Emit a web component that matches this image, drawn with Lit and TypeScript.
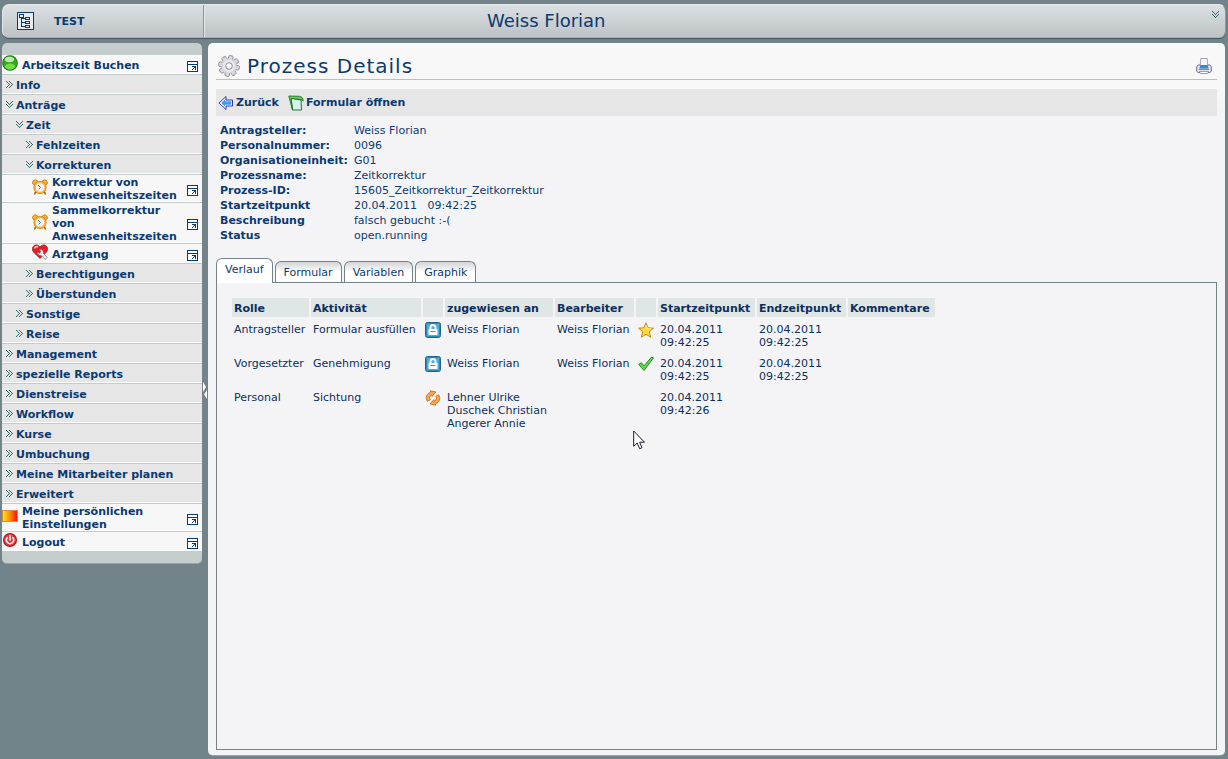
import { LitElement, html, svg, css, nothing } from "lit";
import { customElement, state } from "lit/decorators.js";
import { classMap } from "lit/directives/class-map.js";

const chevronPixels = [0, 3].flatMap((o) => [[o, 0], [o + 1, 1], [o + 2, 2], [o + 3, 3], [o + 2, 4], [o + 1, 5], [o, 6]]);

const chevron = (down: boolean) => html`<svg class="chevron" width="7" height="7" viewBox="0 0 7 7" shape-rendering="crispEdges" aria-hidden="true">
  ${chevronPixels.map(([x, y]) => svg`<rect x=${down ? y : x} y=${down ? x : y} width="1" height="1" fill="#2f6b66"/>`)}
</svg>`;

const pictures = {
  ball: svg`<circle cx="8" cy="8" r="7.800" fill="#1d6b12"/><circle cx="8" cy="8" r="7" fill="#35a81f"/><ellipse cx="8" cy="11.500" rx="5" ry="3" fill="#6fe043"/><ellipse cx="7.500" cy="4.500" rx="4.600" ry="2.800" fill="#d6f7cc" opacity=".85"/>`,
  clock: svg`<path d="M3.500 13L2.500 15.500M12.500 13L13.500 15.500" stroke="#a85a08" stroke-width="1.600"/><path d="M.8 5C0 2.500 1.500.8 4 .8L6 2.500 2.500 5.800zM15.200 5C16 2.500 14.500.8 12 .8L10 2.500l3.500 3.300z" fill="#fbb42a" stroke="#c4720c" stroke-width=".8"/><circle cx="8" cy="8.500" r="6.200" fill="#ffb829" stroke="#d2800f" stroke-width=".8"/><circle cx="8" cy="8.500" r="4.700" fill="#eef1fb" stroke="#e0a040" stroke-width=".5"/><path d="M6 6l2.500 2.500L6.800 10.200" fill="none" stroke="#66676f"/>`,
  heart: svg`<path d="M8 14.500L1.500 8C-.8 5 .8 1 4.200 1 6 1 7.400 2 8 3.200 8.600 2 10 1 11.800 1c3.400 0 5 4 2.700 7z" fill="#e0202c" stroke="#a31019" stroke-width=".8"/><path d="M2.500 4.500C3 2.800 4.500 2.200 6 3" fill="none" stroke="#ffb3b3" stroke-width="1.600"/><path d="M7.500 5.500a3 3 0 0 1 3.800 3.700l4 4.300-2 2-4.200-4.100A3 3 0 0 1 5.400 8l1.900 1.300 1.600-1.500z" fill="#e9ebf0" stroke="#6e6f78" stroke-width=".7"/>`,
  power: svg`<circle cx="8" cy="8" r="7" fill="#a41016"/><circle cx="8" cy="8" r="6" fill="#dc3a3c"/><path d="M5.300 5.600a3.600 3.600 0 1 0 5.400 0M8 3.500V8" fill="none" stroke="#fff" stroke-width="1.500" stroke-linecap="round"/>`,
  window: svg`<g shape-rendering="crispEdges" fill="#0b3a70"><rect x="3" y="3" width="10" height="10" fill="#fff"/><path d="M2 2h11v11H2zM3 3v9h9V3z" fill-rule="evenodd"/><path d="M3 5h9v1H3zM7 7h4v4h-1V9H9v1H8v1H7v-1h1V9h1V8H7z"/></g>`,
  gear: svg`<g transform="translate(11 11)">${Array.from({ length: 8 }, (_, i) => svg`<rect x="-2.300" y="-10.500" width="4.600" height="6" rx="1.500" fill="#d9d8e0" stroke="#85828e" stroke-width=".8" transform="rotate(${i * 45 + 12})"/>`)}<circle r="7.600" fill="#d9d8e0"/><circle r="6" fill="#e9e8ee"/><circle r="3.300" fill="#f7f7f7" stroke="#85828e" stroke-width=".9"/></g>`,
  back: svg`<path d="M1 8L8 1.500V5h6.500v6H8v3.500z" fill="#fff" stroke="#2a3aa0" stroke-linejoin="round"/><path d="M3.200 8L7 4.500V6.300h6.300v3.400H7v1.800z" fill="#3b9cf2"/>`,
  form: svg`<path d="M3 3l10 2 .5 10H4.500z" fill="#d6f2ee" stroke="#14691c" stroke-width=".9"/><path d="M.8 1l10.700.3c2 .2 3.600 1.800 3.800 4.400l-2.600-1.200L3 3.600l1.500 11.200z" fill="#6cc95a" stroke="#14691c" stroke-width=".8" stroke-linejoin="round"/>`,
  printer: svg`<path d="M.7 8.500L2.500 7h11l1.800 1.500v4.800l-1.500 1.200H2.200L.7 13.300z" fill="#e4e5ec" stroke="#6b6d7c"/><path d="M4.800.5h6.400l.6 7.500H4.200z" fill="#f4f6fb" stroke="#8b8fa0" stroke-width=".8"/><path d="M4.500 7h7l1 3.300h-9z" fill="#1f8cf0"/><path d="M3 11.200h10" stroke="#55576a"/><path d="M3.500 13.500h9l-.8 2H4.300z" fill="#fff" stroke="#74768a" stroke-width=".7"/>`,
  lock: svg`<rect x=".5" y=".5" width="15" height="15" rx="2" fill="#5aaad2" stroke="#1a6690"/><rect x="1.500" y="1.500" width="13" height="13" rx="1" fill="none" stroke="#2a86b6"/><path d="M5.500 7V5.500a2.500 2.500 0 0 1 5 0V7" fill="none" stroke="#fff" stroke-width="1.800"/><rect x="3.500" y="7" width="9" height="6" rx=".8" fill="#fff"/><path d="M5.500 9.500h5" stroke="#3f93bf"/>`,
  star: svg`<path d="M8 .8l2.100 5 5.300.4-4.100 3.500 1.400 5.500L8 12.300l-4.700 2.900 1.400-5.500L.6 6.200l5.300-.4z" fill="#ffd83a" stroke="#c98a17" stroke-linejoin="round"/><path d="M8 3l1.300 3.800H13" fill="none" stroke="#fff3ae"/>`,
  check: svg`<path d="M.8 8.500l2.600-1.800 2.600 3.200L13.500 1.200l2 .6L6 14.500z" fill="#5fdc50" stroke="#1f8a22" stroke-linejoin="round"/>`,
  cycle: svg`<g fill="#f9a548" stroke="#c7640f" stroke-width=".7" stroke-linejoin="round" transform="rotate(-25 8 8)">${[0, 180].map((a) => svg`<path transform="rotate(${a} 8 8)" d="M1.500 8.500C.8 4.500 4 1.200 8.300 1.700L8.600.3l4.600 3.500-5.300 2.400.2-1.500C5.800 4.500 4.500 6 4.700 8.500z"/>`)}</g>`,
  tree: svg`<g shape-rendering="crispEdges" fill="none" stroke="#0b3a70"><rect x=".5" y=".5" width="16" height="17" fill="#e9edf2"/><path d="M2.500 2.500h4v3h-4zM8.500 5.500h4v2h-4zM8.500 9.500h4v2h-4zM8.500 13.500h4v2h-4zM4.500 6v9M5 6.500h3M5 10.500h3M5 14.500h3"/></g>`,
};

const boxes: Record<string, number> = { gear: 22, tree: 18 };

const picture = (name: keyof typeof pictures) => {
  const size = boxes[name] ?? 16;
  return html`<svg class="picture" width=${size} height=${size} viewBox="0 0 ${size} ${size}" aria-hidden="true">${pictures[name]}</svg>`;
};

interface MenuEntry {
  label: string;
  level: number;
  open?: boolean;
  icon?: keyof typeof pictures | "swatch";
}

const menu: MenuEntry[] = [
  { label: "Arbeitszeit Buchen", level: 0, icon: "ball" },
  { label: "Info", level: 0 },
  { label: "Anträge", level: 0, open: true },
  { label: "Zeit", level: 1, open: true },
  { label: "Fehlzeiten", level: 2 },
  { label: "Korrekturen", level: 2, open: true },
  { label: "Korrektur von Anwesenheitszeiten", level: 3, icon: "clock" },
  { label: "Sammelkorrektur von Anwesenheitszeiten", level: 3, icon: "clock" },
  { label: "Arztgang", level: 3, icon: "heart" },
  { label: "Berechtigungen", level: 2 },
  { label: "Überstunden", level: 2 },
  { label: "Sonstige", level: 1 },
  { label: "Reise", level: 1 },
  { label: "Management", level: 0 },
  { label: "spezielle Reports", level: 0 },
  { label: "Dienstreise", level: 0 },
  { label: "Workflow", level: 0 },
  { label: "Kurse", level: 0 },
  { label: "Umbuchung", level: 0 },
  { label: "Meine Mitarbeiter planen", level: 0 },
  { label: "Erweitert", level: 0 },
  { label: "Meine persönlichen Einstellungen", level: 0, icon: "swatch" },
  { label: "Logout", level: 0, icon: "power" },
];

@customElement("side-menu")
class SideMenu extends LitElement {
  static styles = css`
    :host { display: block; width: 200px; }
    .frame { border-radius: 5px; overflow: hidden; background: #c5cdcd; padding: 12px 0 11px; border-bottom: 1px solid #98a5a8; }
    .list { list-style: none; margin: 0; padding: 0; }
    .entry { border-bottom: 1px solid #c3cccc; }
    .link {
      display: flex; align-items: center; box-sizing: border-box; min-height: 19px;
      border-bottom: 1px solid #fff; background: #e6e6e6; color: #0b3a70;
      font-weight: bold; text-decoration: none; line-height: 13px; padding: 0 4px;
    }
    .level1 { padding-left: 14px; }
    .level2 { padding-left: 24px; }
    .leaf { background: #f7f7f7; padding-left: 0; }
    .level3 { padding-left: 30px; }
    .chevron, .picture { flex: none; display: block; }
    .chevron { margin-right: 3px; }
    .label { margin: 1px 0 -1px; }
    .leaf .label { margin-left: 4px; margin-right: 4px; flex: 1; }
    .lead { flex: none; height: 18px; margin: -1px 0; }
    .popup { flex: none; margin: 0 -3px -5px -2px; }
    .swatch { display: block; width: 16px; height: 12px; margin-top: 2px; box-sizing: border-box; border: 1px solid #d88a50; background: linear-gradient(90deg, #ffe800, #ff8a00 50%, #f51400); }
  `;

  render() {
    return html`<nav class="frame" aria-label="Menü"><ul class="list">
      ${menu.map((m) => html`<li class="entry">
        <a href="#" class=${classMap({ link: true, leaf: !!m.icon, level1: m.level === 1, level2: m.level === 2, level3: m.level === 3 })}>
          ${m.icon
            ? html`<span class="lead">${m.icon === "swatch" ? html`<span class="swatch"></span>` : picture(m.icon)}</span>`
            : chevron(!!m.open)}
          <span class="label">${m.label}</span>
          ${m.icon ? html`<span class="popup">${picture("window")}</span>` : nothing}
        </a></li>`)}
    </ul></nav>`;
  }
}

const facts = [
  ["Antragsteller:", "Weiss Florian"],
  ["Personalnummer:", "0096"],
  ["Organisationeinheit:", "G01"],
  ["Prozessname:", "Zeitkorrektur"],
  ["Prozess-ID:", "15605_Zeitkorrektur_Zeitkorrektur"],
  ["Startzeitpunkt", "20.04.2011\u00a0\u00a0 09:42:25"],
  ["Beschreibung", "falsch gebucht :-("],
  ["Status", "open.running"],
];

interface Step {
  role: string;
  activity: string;
  state: keyof typeof pictures;
  assigned: string[];
  editor: string;
  result?: keyof typeof pictures;
  start: string[];
  end: string[];
}

const steps: Step[] = [
  { role: "Antragsteller", activity: "Formular ausfüllen", state: "lock", assigned: ["Weiss Florian"], editor: "Weiss Florian", result: "star", start: ["20.04.2011", "09:42:25"], end: ["20.04.2011", "09:42:25"] },
  { role: "Vorgesetzter", activity: "Genehmigung", state: "lock", assigned: ["Weiss Florian"], editor: "Weiss Florian", result: "check", start: ["20.04.2011", "09:42:25"], end: ["20.04.2011", "09:42:25"] },
  { role: "Personal", activity: "Sichtung", state: "cycle", assigned: ["Lehner Ulrike", "Duschek Christian", "Angerer Annie"], editor: "", start: ["20.04.2011", "09:42:26"], end: [] },
];

@customElement("history-table")
class HistoryTable extends LitElement {
  static styles = css`
    :host { display: block; }
    .table { border-collapse: separate; border-spacing: 2px; color: #0c2f5c; line-height: 13px; white-space: nowrap; }
    .role { width: 77px; }
    .activity { width: 110px; }
    .symbol { width: 20px; }
    .assigned { width: 108px; }
    .editor { width: 79px; }
    .start { width: 97px; }
    .end { width: 89px; }
    .comment { width: 87px; }
    .head { background: #e0e5e5; text-align: left; padding: 4px 2px 2px; }
    .cell { vertical-align: top; padding: 4px 2px 2px; }
    .icon { padding-top: 3px; }
    .picture, .line { display: block; }
  `;

  render() {
    const lines = (values: string[]) => values.map((v) => html`<span class="line">${v}</span>`);
    return html`<table class="table">
      <colgroup>
        <col class="role"><col class="activity"><col class="symbol"><col class="assigned"><col class="editor"><col class="symbol"><col class="start"><col class="end"><col class="comment">
      </colgroup>
      <thead><tr>
        ${["Rolle", "Aktivität", "", "zugewiesen an", "Bearbeiter", "", "Startzeitpunkt", "Endzeitpunkt", "Kommentare"].map((h) => html`<th class="head" scope="col">${h}</th>`)}
      </tr></thead>
      <tbody>${steps.map((s) => html`<tr>
        <td class="cell">${s.role}</td>
        <td class="cell">${s.activity}</td>
        <td class="cell icon">${picture(s.state)}</td>
        <td class="cell">${lines(s.assigned)}</td>
        <td class="cell">${s.editor}</td>
        <td class="cell icon">${s.result ? picture(s.result) : nothing}</td>
        <td class="cell">${lines(s.start)}</td>
        <td class="cell">${lines(s.end)}</td>
        <td class="cell"></td>
      </tr>`)}</tbody>
    </table>`;
  }
}

@customElement("app-root")
class AppRoot extends LitElement {
  @state() private tab = "Verlauf";

  static styles = css`
    :host {
      display: flex; flex-direction: column; gap: 5px; box-sizing: border-box; min-height: 100vh;
      padding: 4px 3px 3px 2px; background: #72838a; color: #0b3a70;
      font-family: "DejaVu Sans", Verdana, sans-serif; font-size: 11px; line-height: 13px;
    }
    .bar {
      display: flex; align-items: stretch; height: 34px; box-sizing: border-box; border-radius: 7px; margin-right: -1px;
      background: linear-gradient(#dbe0e3, #bcc2c5); border: 1px solid #e4e8ea; border-bottom-color: #aab1b5;
      border-right-color: #8e999e; box-shadow: 0 1px 1px #46545b;
    }
    .brand { display: flex; align-items: center; gap: 19px; width: 201px; box-sizing: border-box; padding-left: 14px; border-right: 1px solid #8b969b; font-weight: bold; }
    .user { flex: 1; margin: 0; padding-left: 282px; border-left: 1px solid #e4e8ea; font-size: 18px; font-weight: normal; line-height: 32px; }
    .more, .print { border: 0; padding: 0; background: none; display: flex; cursor: pointer; }
    .more { align-self: flex-start; padding: 6px 6px; }
    .columns { flex: 1; display: flex; align-items: stretch; }
    .menu { align-self: flex-start; flex: none; }
    .splitter { flex: none; width: 6px; border: 0; padding: 338px 0 0; background: none; display: flex; }
    .main {
      flex: 1; min-width: 0; display: flex; flex-direction: column; box-sizing: border-box; border-radius: 5px; padding: 8px 8px 5px;
      border-top: 1px solid #fff; border-bottom: 1px solid #98a5a8; background: linear-gradient(#f8f8f8, #f8f8f8 45px, #f4f4f7 72px);
    }
    .titlebar { display: flex; align-items: center; gap: 7px; height: 27px; border-bottom: 1px solid #b9c0c0; padding: 0 5px 0 2px; }
    .title { flex: 1; margin: 0; font-size: 20px; line-height: 24px; font-weight: normal; letter-spacing: 1px; }
    .tools { display: flex; align-items: center; gap: 9px; height: 27px; margin-top: 9px; padding: 0 2px; background: #e6e6e6; }
    .tool { display: flex; align-items: center; gap: 2px; color: inherit; font-weight: bold; text-decoration: none; }
    .facts { display: grid; grid-template-columns: 134px 1fr; row-gap: 2px; margin: 8px 4px 16px; }
    .key { font-weight: bold; white-space: nowrap; }
    .value { margin: 0; }
    .tabs { display: flex; align-items: flex-end; gap: 2px; }
    .tab {
      font: inherit; color: inherit; height: 21px; padding: 0 8px; cursor: pointer;
      border: 1px solid #72838a; border-bottom: 0; border-radius: 6px 6px 0 0; background: linear-gradient(#d2d3d6, #fff 10px);
    }
    .active { height: 25px; padding-bottom: 3px; background: #fff; position: relative; margin-bottom: -1px; }
    .panel { flex: 1; border: 1px solid #72838a; padding: 13px; }
    .pointer { position: absolute; left: 633px; top: 430px; pointer-events: none; }
  `;

  render() {
    return html`
      <header class="bar">
        <div class="brand">${picture("tree")}<span>TEST</span></div>
        <h1 class="user">Weiss Florian</h1>
        <button class="more" aria-label="Mehr">${chevron(true)}</button>
      </header>
      <div class="columns">
        <side-menu class="menu"></side-menu>
        <button class="splitter" aria-label="Menü einklappen"><svg width="6" height="20" viewBox="0 0 6 20"><path d="M1 1l3 5-3 5zM5 9v9L2 13.500z" fill="#fff"/></svg></button>
        <main class="main">
          <div class="titlebar">${picture("gear")}<h2 class="title">Prozess Details</h2><button class="print" aria-label="Drucken">${picture("printer")}</button></div>
          <div class="tools">
            <a href="#" class="tool">${picture("back")}Zurück</a>
            <a href="#" class="tool">${picture("form")}Formular öffnen</a>
          </div>
          <dl class="facts">${facts.map(([k, v]) => html`<dt class="key">${k}</dt><dd class="value">${v}</dd>`)}</dl>
          <div class="tabs" role="tablist">
            ${["Verlauf", "Formular", "Variablen", "Graphik"].map((t) => html`<button role="tab" aria-selected=${t === this.tab} class=${classMap({ tab: true, active: t === this.tab })} @click=${() => (this.tab = t)}>${t}</button>`)}
          </div>
          <section class="panel" role="tabpanel">${this.tab === "Verlauf" ? html`<history-table></history-table>` : nothing}</section>
        </main>
      </div>
      <svg class="pointer" width="13" height="20" viewBox="0 0 13 20" aria-hidden="true"><path d="M.7 1v15.300l3.500-3.300 2.500 5.700 2.300-1-2.400-5.500h4.900z" fill="#fff" stroke="#1a1a2a"/></svg>`;
  }
}
